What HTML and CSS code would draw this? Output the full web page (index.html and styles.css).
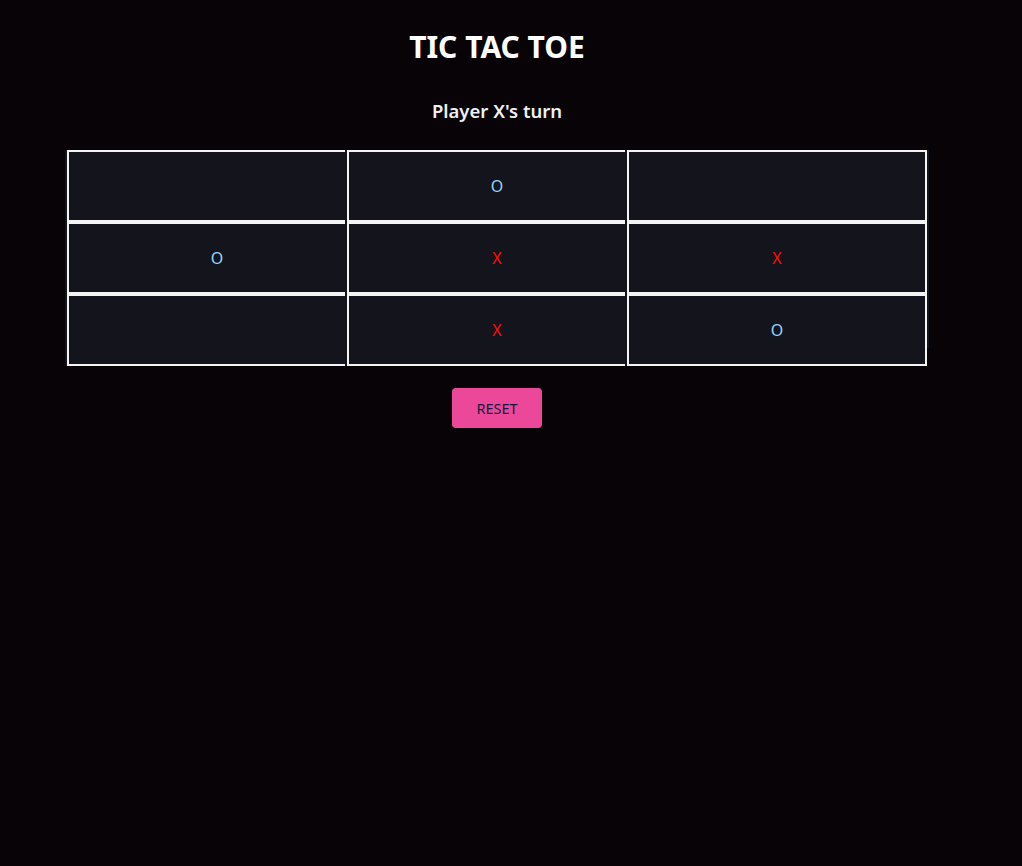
FILE: index.html
```html
<!DOCTYPE html>
<html lang="en">
<head>
<meta charset="utf-8">
<title>Tic Tac Toe</title>
<link rel="stylesheet" href="styles.css">
</head>
<body>
  <main class="app">
    <h1 class="title">TIC TAC TOE</h1>
    <h2 class="status">Player X's turn</h2>
    <div class="board">
      <button class="cell"></button>
      <button class="cell cell-o">O</button>
      <button class="cell"></button>
      <button class="cell cell-o">O</button>
      <button class="cell cell-x">X</button>
      <button class="cell cell-x">X</button>
      <button class="cell"></button>
      <button class="cell cell-x">X</button>
      <button class="cell cell-o">O</button>
    </div>
    <button class="reset">RESET</button>
  </main>
</body>
</html>
```

FILE: styles.css
```css
html, body {
  margin: 0;
  padding: 0;
  background: #070307;
  min-height: 100%;
}

body {
  font-family: "Noto Sans", "Open Sans", "DejaVu Sans", sans-serif;
  color: #f2f2f2;
}

.app {
  width: 860px;
  margin-left: 67px;
  padding-top: 30px;
  display: flex;
  flex-direction: column;
  align-items: center;
}

.title {
  margin: 0;
  font-size: 30px;
  line-height: 34px;
  font-weight: 700;
  color: #ffffff;
}

.status {
  margin: 35px 0 0;
  font-size: 18.5px;
  line-height: 24px;
  font-weight: 600;
  color: #f0f0f0;
}

.board {
  align-self: stretch;
  margin: 27px -2px 0;
  padding: 0 2px;
  height: 198px;
  background: #13141c;
  display: grid;
  grid-template-columns: 280px 280px 300px;
  grid-template-rows: repeat(3, 72px);
}

.cell {
  width: 300px;
  height: 72px;
  box-sizing: border-box;
  margin: 0;
  padding: 0;
  border: 2px solid #f4f4f4;
  background: #13141c;
  box-shadow: -2px 0 0 #13141c;
  display: flex;
  align-items: center;
  justify-content: center;
  font-family: "Noto Sans", "Open Sans", sans-serif;
  font-size: 16px;
  line-height: 20px;
}

.cell-o {
  color: #9ad2ff;
}

.cell-x {
  color: #ff0d0d;
}

.reset {
  margin-top: 40px;
  width: 90px;
  height: 40px;
  border: none;
  border-radius: 4px;
  background: #ec4899;
  color: #1c1340;
  font-family: "Noto Sans", "Open Sans", sans-serif;
  font-size: 14.5px;
  padding: 0;
}
```
